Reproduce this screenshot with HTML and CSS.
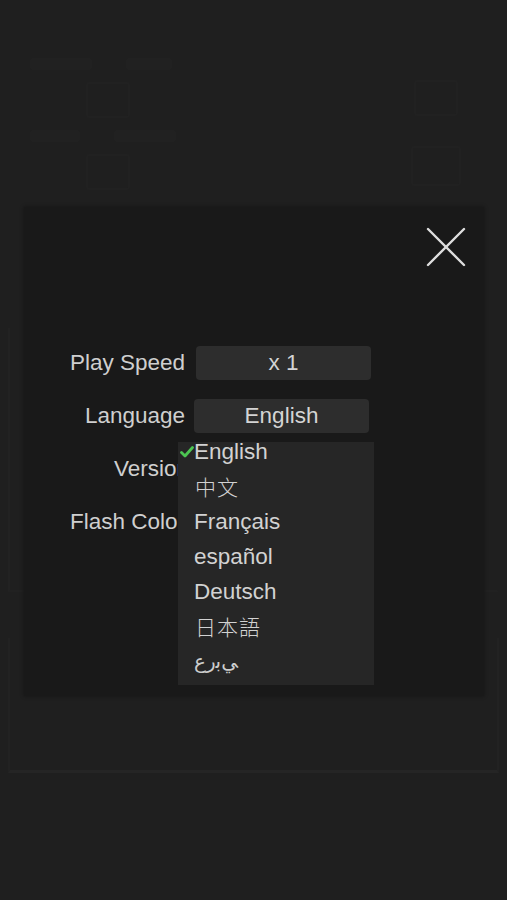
FILE: index.html
```html
<!DOCTYPE html>
<html>
<head>
<meta charset="utf-8">
<link rel="stylesheet" href="styles.css">
</head>
<body>
<div class="screen">
  <div class="bg">
    <div class="bg-head">
      <div class="bg-col">
        <div class="bg-line"><span class="ghost w60"></span><span class="ghost w45"></span></div>
        <div class="ghost-icon"></div>
        <div class="bg-line"><span class="ghost w50"></span><span class="ghost w60"></span></div>
        <div class="ghost-icon"></div>
      </div>
      <div class="bg-col right">
        <div class="ghost-icon"></div>
        <div class="ghost-icon wide"></div>
      </div>
    </div>
    <div class="bg-panel p1"></div>
    <div class="bg-panel p2"></div>
  </div>

  <div class="dialog">
    <div class="dialog-top">
      <button class="close" aria-label="close">
        <svg width="40" height="40" viewBox="0 0 40 40"><path d="M2 2 L38 38 M38 2 L2 38" stroke="#dedede" stroke-width="2.4" stroke-linecap="round" fill="none"/></svg>
      </button>
    </div>
    <div class="rows">
      <div class="row"><div class="label">Play Speed</div><div class="btn b1">x 1</div></div>
      <div class="row"><div class="label">Language</div><div class="btn b2">English</div></div>
      <div class="row"><div class="label ver">Version</div></div>
      <div class="row"><div class="label">Flash Color</div></div>
    </div>
    <ul class="menu">
      <li class="sel"><svg class="check" width="14" height="12" viewBox="0 0 14 12"><path d="M1.5 6.5 L5 10 L12.5 1.5" stroke="#4cc552" stroke-width="2.8" fill="none" stroke-linecap="round" stroke-linejoin="round"/></svg>English</li>
      <li class="cjk">中文</li>
      <li>Français</li>
      <li>español</li>
      <li>Deutsch</li>
      <li class="cjk">日本語</li>
      <li class="ar"><bdo dir="ltr">&#xFEC9;&#xFEAD;&#xFE91;&#xFEF2;</bdo></li>
    </ul>
  </div>
</div>
</body>
</html>
```

FILE: styles.css
```css
html, body {
  margin: 0;
  padding: 0;
  background: #1f1f1f;
}
body {
  width: 507px;
  height: 900px;
  overflow: hidden;
  font-family: "Liberation Sans", Arial, sans-serif;
}
.screen {
  position: relative;
  width: 507px;
  height: 900px;
}
.bg {
  display: flex;
  flex-direction: column;
  padding: 58px 8px 0 8px;
}
.bg-head {
  display: flex;
  justify-content: space-between;
  padding: 0 38px 0 22px;
  height: 140px;
}
.bg-col {
  display: flex;
  flex-direction: column;
  gap: 12px;
}
.bg-col.right {
  padding-top: 22px;
  gap: 30px;
  align-items: center;
}
.bg-line {
  display: flex;
  gap: 34px;
}
.ghost {
  display: block;
  height: 12px;
  background: #212121;
  border-radius: 2px;
}
.w60 { width: 62px; }
.w45 { width: 46px; }
.w50 { width: 50px; }
.ghost-icon {
  width: 40px;
  height: 32px;
  margin-left: 56px;
  border: 2px solid #212121;
  border-radius: 3px;
}
.bg-col.right .ghost-icon { margin-left: 0; }
.ghost-icon.wide { width: 46px; height: 36px; }
.bg-panel {
  border: 2px solid #222222;
  border-top: none;
}
.bg-panel.p1 {
  margin-top: 130px;
  height: 262px;
  border-right-color: #1f1f1f;
  border-bottom: 2px solid #212121;
}
.bg-panel.p2 {
  margin-top: 46px;
  height: 132px;
  border-bottom: 3px solid #252525;
}

.dialog {
  position: absolute;
  left: 24px;
  top: 207px;
  width: 460px;
  height: 489px;
  background: #191919;
  box-shadow: 0 0 4px rgba(0,0,0,0.4);
}
.dialog-top {
  display: flex;
  justify-content: flex-end;
  padding: 20px 18px 0 0;
  height: 118px;
  box-sizing: border-box;
}
.close {
  width: 40px;
  height: 40px;
  padding: 0;
  border: none;
  background: none;
}
.close svg { display: block; }
.rows {
  display: flex;
  flex-direction: column;
  gap: 18px;
  padding-top: 20px;
}
.row {
  display: flex;
  align-items: center;
  height: 35px;
}
.label {
  width: 161px;
  text-align: right;
  color: #cfcfcf;
  font-size: 22.5px;
  white-space: nowrap;
}
.label.ver { width: 165px; }
.btn {
  margin-left: 11px;
  width: 175px;
  height: 34px;
  background: #2d2d2d;
  border-radius: 4px;
  color: #d4d4d4;
  font-size: 22.5px;
  line-height: 34px;
  text-align: center;
}
.btn.b2 { margin-left: 9px; }
.menu {
  position: absolute;
  left: 154px;
  top: 235px;
  width: 196px;
  height: 243px;
  margin: 0;
  padding: 0;
  list-style: none;
  background: #262626;
  box-sizing: border-box;
}
.menu li {
  position: relative;
  height: 35px;
  line-height: 35px;
  padding-left: 16px;
  color: #d2d2d2;
  font-size: 22.5px;
  margin-top: -8px;
  margin-bottom: 8px;
}
.menu li.cjk {
  font-family: "Noto Sans CJK SC", "Liberation Sans", sans-serif;
  font-size: 21px;
  font-weight: 300;
  padding-left: 17px;
  letter-spacing: 1px;
}
.menu li.ar {
  font-family: "DejaVu Sans", sans-serif;
  font-size: 20px;
  color: #cccccc;
}
.check {
  position: absolute;
  left: 2px;
  top: 12px;
}
```
